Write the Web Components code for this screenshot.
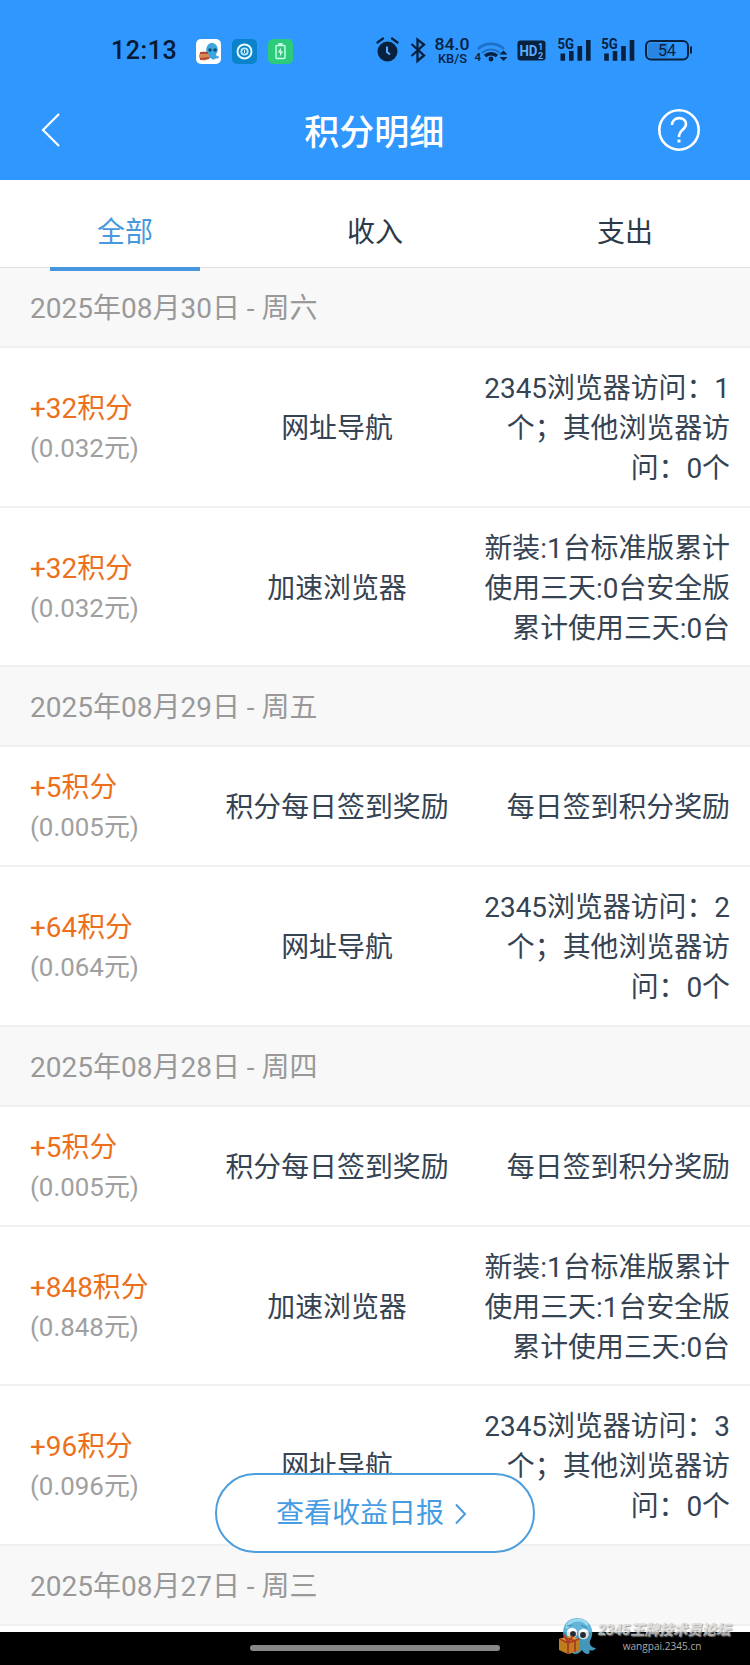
<!DOCTYPE html>
<html lang="zh-CN">
<head>
<meta charset="utf-8">
<title>积分明细</title>
<style>
  body {
    margin: 0;
    width: 750px;
    height: 1665px;
    overflow: hidden;
    font-family: Roboto, "Noto Sans CJK SC", sans-serif;
    color: #354353;
    background: #fff;
  }
</style>
</head>
<body>
<points-page></points-page>

<script>
const mascot = /*html*/ `
  <path d="M9 26C1 17 6 2 19 2s19 13 13 23c-1 4 2 7 6 7-2 3-5 3-7 2 1 2 1 3-1 4-3 0-5-2-6-4-3 4-7 5-10 3-3 1-7 0-8-2 2-2 3-5 3-9z" fill="#4eabd5"/>
  <path d="M9 11C11 4 23 1 29 8" fill="none" stroke="#8fd3ee" stroke-width="3" stroke-linecap="round"/>
  <circle cx="14" cy="17" r="5.3" fill="#fff"/><circle cx="25.500" cy="18" r="5.300" fill="#fff"/>
  <circle cx="15" cy="18" r="2.900" fill="#26323d"/><circle cx="25" cy="19" r="2.900" fill="#26323d"/>
  <path d="M9 10l5-1M23 9l6 3" stroke="#25729b"/>`

class StatusBar extends HTMLElement {
  constructor () {
    super()
    this.shadow = this.attachShadow({ mode: 'open' })
  }

  connectedCallback () {
    this.shadow.innerHTML =
    /*html*/ `
      <style>
        :host {
          display: flex;
          justify-content: space-between;
          box-sizing: border-box;
          height: 100px;
          padding: 34px 56px 34px 111px;
          color: #07213f;
        }
        .side { display: flex; height: 34px; align-items: center; }
        .time {
          width: 85px;
          font: 500 25px/34px Roboto, sans-serif;
          letter-spacing: 0.6px;
          color: #061a35;
        }
        .apps { display: flex; gap: 11px; }
        svg { display: block; font-family: Roboto, sans-serif; }
      </style>
      <div class="side">
        <span class="time">12:13</span>
        <div class="apps">
          <svg width="25" height="25" viewBox="0 0 25 25">
            <rect width="25" height="25" rx="5" fill="#fff"/>
            <path d="M11 16c-2-6 0-12 5-12s8 7 4 11c0 2 2 3 3 2 0 3-2 3-3 2-1 2-4 2-5 0-2 1-4 0-4-3z" fill="#3da6dd"/>
            <circle cx="14" cy="11" r="1.800" fill="#124d78"/><circle cx="19" cy="11" r="1.800" fill="#124d78"/>
            <ellipse cx="8" cy="17" rx="5" ry="4.500" fill="#d98a4f"/>
            <path d="M4 14h8M4 20l9-1" stroke="#b4463a" stroke-width="2"/>
          </svg>
          <svg width="25" height="25" viewBox="0 0 25 25">
            <rect width="25" height="25" rx="5" fill="#0b83cb"/>
            <circle cx="12.500" cy="12.500" r="7" fill="none" stroke="#e6faff" stroke-width="2"/>
            <circle cx="12.500" cy="12.500" r="3.200" fill="none" stroke="#bce9fb" stroke-width="1.800"/>
            <path d="M12.500 11v3" stroke="#e6faff"/>
          </svg>
          <svg width="25" height="25" viewBox="0 0 25 25">
            <rect width="25" height="25" rx="5" fill="#2bcb79"/>
            <rect x="8" y="6.500" width="9" height="13" rx="1" fill="none" stroke="#cffff0" stroke-width="1.400"/>
            <path d="M10.500 5h4" stroke="#cffff0" stroke-width="2"/>
            <path d="M13 8.500l-3 5h2.300l-.5 4 3.200-5h-2.300z" fill="#e4fff6"/>
          </svg>
        </div>
      </div>
      <div class="side">
        <svg width="318" height="34" viewBox="376 34 318 34" fill="currentColor">
          <!-- alarm -->
          <circle cx="387.500" cy="51.500" r="10"/>
          <path d="M377.500 42.500l5.500-4M397.500 42.500l-5.500-4" stroke="currentColor" stroke-width="2.200" stroke-linecap="round"/>
          <path d="M387 46.500v5.500l3 2.500" fill="none" stroke="#5badff" stroke-width="2"/>
          <!-- bluetooth -->
          <path d="M411.500 44l12.500 11.500-6.500 5.500V39.500l6.500 5L411.500 56" fill="none" stroke="currentColor" stroke-width="2.300"/>
          <text x="434.500" y="49.700" font-size="16" font-weight="500" textLength="35" lengthAdjust="spacingAndGlyphs">84.0</text>
          <text x="438" y="62.500" font-size="12.500" font-weight="500" textLength="29" lengthAdjust="spacingAndGlyphs">KB/S</text>
          <!-- wifi -->
          <g fill="none">
            <path d="M478 49a19 19 0 0 1 26 0" stroke="#1d70c5" stroke-width="2.600"/>
            <path d="M482 53a13 13 0 0 1 18 0" stroke="#1d70c5" stroke-width="2"/>
            <path d="M485 56a9 9 0 0 1 12 0" stroke="currentColor" stroke-width="3.400"/>
          </g>
          <circle cx="491" cy="59" r="2.400"/>
          <text x="474.500" y="61.300" font-size="11.500" font-weight="500">4</text>
          <path d="M499.500 54.500l4-4 4 4zM499.500 57h8l-4 4z"/>
          <!-- HD -->
          <rect x="517.500" y="40.500" width="28" height="20" rx="3"/>
          <text x="519.500" y="55.500" font-size="14" font-weight="700" fill="#5badff" textLength="18" lengthAdjust="spacingAndGlyphs">HD</text>
          <g font-size="9" font-weight="700" fill="#5badff"><text x="538" y="49.500">1</text><text x="538" y="58.500">2</text></g>
          <!-- signal -->
          <g id="signal">
            <text x="557.500" y="49" font-size="14" font-weight="700" textLength="16.500" lengthAdjust="spacingAndGlyphs">5G</text>
            <path d="M560.500 53.500h4.600V60.700h-4.600zM569 51h4.600v9.700H569zM577.500 46h4.600v14.700h-4.600zM586 40h4.600v20.700H586z"/>
          </g>
          <use href="#signal" x="43.700"/>
          <!-- battery -->
          <rect x="646" y="41" width="42" height="18.500" rx="5" fill="none" stroke="currentColor" stroke-width="2"/>
          <path d="M651 43h17v14.500h-17a3 3 0 0 1-3-3V46a3 3 0 0 1 3-3z" fill="#267bd1" opacity=".65"/>
          <path d="M690 46.500h2v7h-2z"/>
          <text x="667" y="56" font-size="16" text-anchor="middle">54</text>
        </svg>
      </div>
    `
  }
}
customElements.define('status-bar', StatusBar)

class NavBar extends HTMLElement {
  constructor () {
    super()
    this.shadow = this.attachShadow({ mode: 'open' })
  }

  connectedCallback () {
    this.shadow.innerHTML =
    /*html*/ `
      <style>
        :host {
          display: flex;
          align-items: center;
          justify-content: space-between;
          height: 60px;
          padding: 0 49px 20px 38.500px;
          color: #fff;
        }
        h1 {
          margin: 8px 0 0 9px;
          font-size: 35px;
          line-height: 52px;
          font-weight: 500;
        }
        svg { display: block; fill: none; stroke: currentColor; }
      </style>
      <svg width="44" height="44" viewBox="0 0 44 44" stroke-width="2.200"><path d="M20 6L4 22l16 16"/></svg>
      <h1><slot></slot></h1>
      <svg width="44" height="44" viewBox="0 0 44 44" stroke-width="2.600">
        <circle cx="22" cy="22" r="19.700"/>
        <path d="M15 17c0-9 14-9 14-1 0 6-7 5-7 13" stroke-width="2.600"/>
        <path d="M22 31.500v3" stroke-width="3"/>
      </svg>
    `
  }
}
customElements.define('nav-bar', NavBar)

class TabItem extends HTMLElement {
  constructor () {
    super()
    this.shadow = this.attachShadow({ mode: 'open' })
  }

  connectedCallback () {
    this.shadow.innerHTML =
    /*html*/ `
      <style>
        :host {
          display: flex;
          flex-direction: column;
          align-items: center;
          flex: 1;
          font-size: 28px;
          line-height: 40px;
          color: #2c3949;
        }
        :host([active]) { color: #4899dc; }
        span { margin: 32.500px 0 14.500px; }
        i { flex: none; width: 150px; height: 4px; }
        :host([active]) i { background: #4596dc; }
      </style>
      <span><slot></slot></span>
      <i></i>
    `
  }
}
customElements.define('tab-item', TabItem)

class DateRow extends HTMLElement {
  constructor () {
    super()
    this.shadow = this.attachShadow({ mode: 'open' })
  }

  connectedCallback () {
    this.shadow.innerHTML =
    /*html*/ `
      <style>
        :host {
          display: flex;
          align-items: center;
          flex: none;
          box-sizing: border-box;
          height: 79.9px;
          padding: 4px 30px 0;
          border-bottom: 2px solid #f0f0f0;
          background: #f8f8f8;
          font-size: 28px;
          line-height: 40px;
          color: #999;
        }
      </style>
      <div><slot></slot></div>
    `
  }
}
customElements.define('date-row', DateRow)

class PointRow extends HTMLElement {
  constructor () {
    super()
    this.shadow = this.attachShadow({ mode: 'open' })
  }

  connectedCallback () {
    this.shadow.innerHTML =
    /*html*/ `
      <style>
        :host {
          display: grid;
          grid-template-columns: 164px 280px 250px;
          justify-content: space-between;
          align-items: center;
          flex: none;
          box-sizing: border-box;
          padding: 21px 20px 16.8px 30px;
          border-bottom: 2px solid #f0f0f0;
          background: #fff;
          font-size: 27.9px;
          line-height: 40px;
        }
        .points { color: #ec701b; }
        .money { color: #a0a0a0; font-size: 25.9px; line-height: 39px; padding-bottom: 1px; }
        .source { text-align: center; }
        .detail { text-align: right; }
      </style>
      <div>
        <div class="points">+${this.getAttribute('points')}积分</div>
        <div class="money">(${this.getAttribute('money')}元)</div>
      </div>
      <div class="source">${this.getAttribute('source')}</div>
      <div class="detail"><slot></slot></div>
    `
  }
}
customElements.define('point-row', PointRow)

class ReportButton extends HTMLElement {
  constructor () {
    super()
    this.shadow = this.attachShadow({ mode: 'open' })
  }

  connectedCallback () {
    this.shadow.innerHTML =
    /*html*/ `
      <style>
        :host { display: block; }
        button {
          display: flex;
          align-items: center;
          justify-content: center;
          gap: 11px;
          box-sizing: border-box;
          width: 320px;
          height: 80px;
          padding: 1px 7px 0 0;
          border: 2px solid #4c9edd;
          border-radius: 40px;
          background: #fff;
          color: #469ce2;
          font: 28px/40px Roboto, "Noto Sans CJK SC", sans-serif;
        }
      </style>
      <button>
        <slot></slot>
        <svg width="12" height="22" viewBox="0 0 12 22" fill="none" stroke="currentColor" stroke-width="2"><path d="M1 1.500l9 9.500-9 9.500"/></svg>
      </button>
    `
  }
}
customElements.define('report-button', ReportButton)

class ForumMark extends HTMLElement {
  constructor () {
    super()
    this.shadow = this.attachShadow({ mode: 'open' })
  }

  connectedCallback () {
    this.shadow.innerHTML =
    /*html*/ `
      <style>
        :host { display: flex; }
        .text { display: flex; flex-direction: column; align-items: center; padding-top: 5px; }
        svg { opacity: .88; }
        b {
          font-size: 14.3px;
          line-height: 18px;
          font-style: italic;
          font-weight: 900;
          white-space: nowrap;
          color: #d6d6d6;
          opacity: .8;
          text-shadow: 1px 1px 1px #888;
        }
        small { font: 10.1px/14px "Open Sans", sans-serif; color: #aaa; margin-right: 4px; }
      </style>
      <svg width="40" height="40" viewBox="0 0 40 40">
        ${mascot}
        <path d="M1 23l11-3 9 3v12l-11 3-9-4z" fill="#d99025"/>
        <path d="M1 23l11-3 9 3-11 4z" fill="#efb443"/>
        <path d="M10 27v11M2 23l8 4 11-4M5 21l12 4v11M10 26l-4-7M10 26l5-6" fill="none" stroke="#c44526" stroke-width="1.800"/>
      </svg>
      <div class="text"><b>2345王牌技术员论坛</b><small>wangpai.2345.cn</small></div>
    `
  }
}
customElements.define('forum-mark', ForumMark)

class PointsPage extends HTMLElement {
  constructor () {
    super()
    this.shadow = this.attachShadow({ mode: 'open' })
  }

  connectedCallback () {
    this.shadow.innerHTML =
    /*html*/ `
      <style>
        :host {
          display: flex;
          flex-direction: column;
          position: relative;
          width: 750px;
          height: 1665px;
          overflow: hidden;
        }
        header { background: #2f97fe; height: 180px; flex: none; }
        nav {
          display: flex;
          flex: none;
          box-sizing: border-box;
          height: 88px;
          border-bottom: 1px solid #e2e2e2;
          position: relative;
          z-index: 1;
        }
        main {
          display: flex;
          flex-direction: column;
          flex: 1;
          min-height: 0;
          overflow: hidden;
        }
        footer {
          display: flex;
          flex: none;
          height: 33px;
          align-items: center;
          justify-content: center;
          background: #000;
        }
        footer i { width: 250px; height: 6px; border-radius: 3px; background: #888; margin-bottom: 2px; }
        report-button { position: absolute; left: 215px; top: 1473px; }
        forum-mark { position: absolute; left: 558px; top: 1616px; }
      </style>
      <header>
        <status-bar></status-bar>
        <nav-bar>积分明细</nav-bar>
      </header>
      <nav>
        <tab-item active>全部</tab-item>
        <tab-item>收入</tab-item>
        <tab-item>支出</tab-item>
      </nav>
      <main>
        <date-row>2025年08月30日 - 周六</date-row>
        <point-row points="32" money="0.032" source="网址导航">2345浏览器访问：1个；其他浏览器访问：0个</point-row>
        <point-row points="32" money="0.032" source="加速浏览器">新装:1台标准版累计使用三天:0台安全版累计使用三天:0台</point-row>
        <date-row>2025年08月29日 - 周五</date-row>
        <point-row points="5" money="0.005" source="积分每日签到奖励">每日签到积分奖励</point-row>
        <point-row points="64" money="0.064" source="网址导航">2345浏览器访问：2个；其他浏览器访问：0个</point-row>
        <date-row>2025年08月28日 - 周四</date-row>
        <point-row points="5" money="0.005" source="积分每日签到奖励">每日签到积分奖励</point-row>
        <point-row points="848" money="0.848" source="加速浏览器">新装:1台标准版累计使用三天:1台安全版累计使用三天:0台</point-row>
        <point-row points="96" money="0.096" source="网址导航">2345浏览器访问：3个；其他浏览器访问：0个</point-row>
        <date-row>2025年08月27日 - 周三</date-row>
      </main>
      <footer><i></i></footer>
      <report-button>查看收益日报</report-button>
      <forum-mark></forum-mark>
    `
  }
}
customElements.define('points-page', PointsPage)
</script>
</body>
</html>
